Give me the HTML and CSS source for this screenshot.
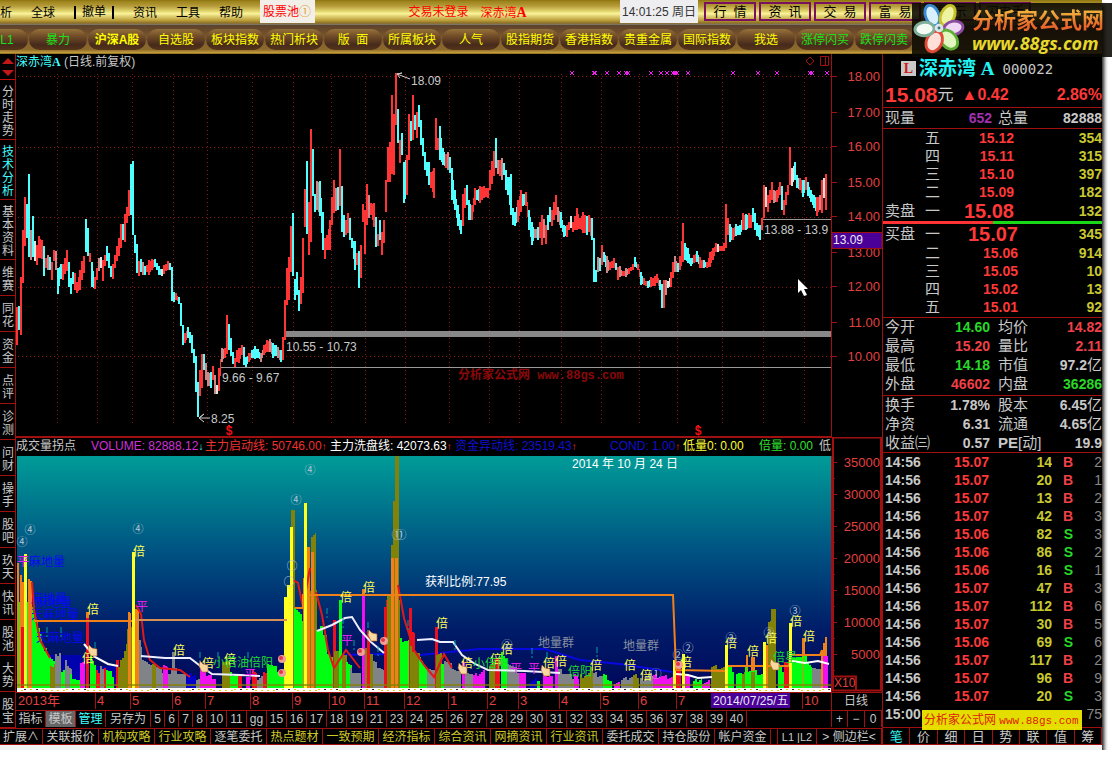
FILE: index.html
```html
<!DOCTYPE html>
<html lang="zh-CN">
<head>
<meta charset="utf-8">
<title>深赤湾A 000022</title>
<link rel="stylesheet" href="styles.css">
</head>
<body>
<div class="window">
  <header class="top">
    <nav class="menubar">
      <div class="menus">
        <button class="menu first">析</button><button class="menu">全球</button><button class="menu barred">撤单</button><button class="menu">资讯</button><button class="menu">工具</button><button class="menu">帮助</button>
      </div>
      <button class="pool">股票池<span class="coin">①</span></button>
      <p class="status"><span>交易未登录</span><span>深赤湾<b>A</b></span></p>
      <time class="clock">14:01:25 周日</time>
      <div class="quick">
        <button>行&nbsp; 情</button><button>资&nbsp; 讯</button><button>交&nbsp; 易</button><button>富&nbsp; 易</button><button>提&nbsp; 示</button><button>闪电手</button>
      </div>
    </nav>
    <nav class="tabs">
      <button class="green cut">L1</button><button class="green">暴力</button><button class="active">沪深A股</button><button>自选股</button><button>板块指数</button><button>热门析块</button><button>版&nbsp; 面</button><button>所属板块</button><button>人气</button><button>股指期货</button><button>香港指数</button><button>贵重金属</button><button>国际指数</button><button>我选</button><button class="green">涨停闪买</button><button class="green">跌停闪卖</button>
    </nav>
    <a class="brand" href="#">
      <svg viewBox="0 0 54 54" class="flower" aria-hidden="true">
        <g stroke-width="3">
          <ellipse cx="20" cy="13" rx="7" ry="11" transform="rotate(-22 20 13)" fill="#d8f0ff" stroke="#3a8bd0"/>
          <ellipse cx="36" cy="13" rx="7" ry="11" transform="rotate(25 36 13)" fill="#eef3a0" stroke="#c5c028"/>
          <ellipse cx="42" cy="26" rx="7" ry="10" transform="rotate(78 42 26)" fill="#f0d8f4" stroke="#8a4ba0"/>
          <ellipse cx="37" cy="38" rx="8" ry="11" transform="rotate(140 37 38)" fill="#e2f7c0" stroke="#5fae38"/>
          <ellipse cx="22" cy="40" rx="8" ry="11" transform="rotate(25 22 40)" fill="#ffe0d8" stroke="#df4a38"/>
          <ellipse cx="12" cy="27" rx="7" ry="10" transform="rotate(85 12 27)" fill="#f4fbf4" stroke="#7fae9a"/>
          <circle cx="27" cy="26" r="3" fill="#3f6f78" stroke="#d8e8e8"/>
        </g>
      </svg>
      <span class="brand-text"><b class="brand-name">分析家公式网</b><b class="brand-url">www.88gs.com</b></span>
    </a>
  </header>

  <div class="body">
    <div class="left">
      <div class="work">
        <nav class="side">
          <div class="arrows"><button class="up" aria-label="上翻"></button><button class="down" aria-label="下翻"></button></div>
          <button class="tall">分时走势</button><button class="tall on">技术分析</button><button class="tall">基本资料</button><button>维赛</button><button>同花</button><button>资金</button><button>点评</button><button>诊测</button><button>问财</button><button>操手</button><button>股吧</button><button>玖天</button><button>快讯</button><button>股池</button><button>大势</button><button>股宝</button>
        </nav>
        <main class="charts">
          <svg id="price" class="plot" viewBox="16 54 866 383"></svg>
          <div class="volume">
            <div class="volume-main">
              <div class="legend">
                <span class="c-grey">成交量拐点</span><span class="c-mag">VOLUME: 82888.12<i class="c-cyan">↓</i></span><span class="c-red">主力启动线: 50746.00<i>↑</i></span><span class="c-white">主力洗盘线: 42073.63<i class="c-red">↑</i></span><span class="c-blue">资金异动线: 23519.43<i class="c-red">↑</i></span><span class="c-blue">COND: 1.00<i class="c-red">↑</i></span><span class="c-yellow">低量0: 0.00</span><span class="c-green">倍量: 0.00</span><span class="c-grey">低</span>
              </div>
              <svg id="volume" class="plot" viewBox="16 456 816 236"></svg>
            </div>
            <svg id="scale" class="plot" viewBox="832 437 50 255"></svg>
          </div>
          <svg id="dates" class="plot" viewBox="16 692 866 18"></svg>
          <div class="templates" id="templates"></div>
        </main>
      </div>
      <nav class="links">
        <button class="narrow">扩展∧</button><button>关联报价</button><button class="gold">机构攻略</button><button class="gold">行业攻略</button><button>逐笔委托</button><button class="gold">热点题材</button><button class="gold">一致预期</button><button class="gold">经济指标</button><button class="gold">综合资讯</button><button class="gold">网摘资讯</button><button class="gold">行业资讯</button><button>委托成交</button><button>持仓股份</button><button>帐户资金</button><span class="gap"></span><button class="levels">L1 |L2</button><button class="grow">&gt; 侧边栏&lt;</button>
      </nav>
    </div>

    <aside class="quote">
      <h1 class="stock"><span class="badge">L</span><span class="name">深赤湾 A</span><span class="code">000022</span></h1>
      <p class="last"><b class="px">15.08</b><span class="unit">元</span><b class="chg">▲0.42</b><b class="pct">2.86%</b></p>
      <p class="vol"><span>现量</span><b class="purple">652</b><span>总量</span><b>82888</b></p>
      <table class="book" id="asks"></table>
      <div class="ratio"><span></span></div>
      <table class="book" id="bids"></table>
      <table class="stats">
        <tr><th>今开</th><td class="g">14.60</td><th>均价</th><td class="r">14.82</td></tr>
        <tr><th>最高</th><td class="r">15.20</td><th>量比</th><td class="r">2.11</td></tr>
        <tr><th>最低</th><td class="g">14.18</td><th>市值</th><td>97.2<i>亿</i></td></tr>
        <tr><th>外盘</th><td class="r">46602</td><th>内盘</th><td class="g">36286</td></tr>
      </table>
      <table class="stats">
        <tr><th>换手</th><td>1.78%</td><th>股本</th><td>6.45<i>亿</i></td></tr>
        <tr><th>净资</th><td>6.31</td><th>流通</th><td>4.65<i>亿</i></td></tr>
        <tr><th>收益㈢</th><td>0.57</td><th><b>PE</b>[动]</th><td>19.9</td></tr>
      </table>
      <table class="ticks" id="ticks"></table>
      <nav class="modes"><button class="on">笔</button><button>价</button><button>细</button><button>日</button><button>势</button><button>联</button><button>值</button><button>筹</button></nav>
      <p class="stamp">分析家公式网 <span>www.88gs.com</span></p>
    </aside>
  </div>
</div>
<script src="app.js"></script>
</body>
</html>
```

FILE: styles.css
```css
* { box-sizing: border-box; }
body {
  margin: 0;
  background: #fff;
  color: #c8c8c8;
  font: 12px/16px "Liberation Sans", "Noto Sans CJK SC", sans-serif;
}
button {
  margin: 0;
  padding: 0;
  border: 0;
  background: none;
  color: inherit;
  font: inherit;
  white-space: nowrap;
  cursor: pointer;
}
p, h1 { margin: 0; }
i { font-style: normal; }

.window {
  margin-right: 12px;
  padding-bottom: 5px;
  background: #f2f2f2;
  box-shadow: 2px 5px 4px 0 #111;
}
.top { position: relative; }
.menubar {
  display: flex;
  height: 25px;
  overflow: hidden;
  color: #000;
  background: linear-gradient(#8a7010 0, #9a8118 4%, #b79d3c 25%, #e9df78 48%, #fbf39b 54%, #b99c37 82%, #8e6f25 92%, #777 100%);
}
.menus { display: flex; flex: 0 0 260px; align-items: center; gap: 19px; }
.menus .first { flex: 0 0 12px; }
.menus .barred { border: solid #000; border-width: 0 2px; padding: 0 6px; line-height: 13px; }
.pool { display: flex; align-items: center; flex: 0 0 55px; padding-left: 3px; height: 23px; background: #f2efe8; color: #f00; }
.coin { color: #e0a030; font-size: 12px; }
.status { display: flex; gap: 12px; flex: 1 1 auto; justify-content: center; align-items: center; color: #f00; line-height: 23px; }
.status b { font-family: "Liberation Serif", serif; font-size: 14px; }
.clock { flex: 0 0 74px; height: 23px; padding: 0 2px; line-height: 25px; background: #eeeef0; color: #333; white-space: nowrap; }
.quick { display: flex; flex: 0 0 404px; gap: 3px; padding: 2px 0 3px 6px; overflow: hidden; }
.quick button { flex: 0 0 52px; height: 19px; border: 2px solid #7a1060; font-size: 13px; line-height: 15px; }

.tabs {
  display: flex;
  height: 29px;
  padding: 4px 0;
  gap: 1px;
  overflow: hidden;
  color: #ff0;
  background: linear-gradient(#5c422e 0, #6b4b2b 20%, #83612e 60%, #8c6a2c 85%, #c09a38 95%, #8a6420 100%);
}
.tabs button {
  flex: 0 0 58px;
  height: 21px;
  border-radius: 11px;
  background: linear-gradient(#96733a 0, #704b28 35%, #472a1b 75%, #553419 100%);
}
.tabs .cut { flex: 0 0 28px; border-radius: 0 11px 11px 0; padding-right: 14px; }
.tabs .green { color: #1be01b; }
.tabs .active { font-weight: bold; }

.brand {
  position: absolute;
  right: -10px;
  top: 3px;
  display: flex;
  width: 200px;
  height: 54px;
  background: rgba(10, 8, 2, .88);
  text-decoration: none;
  white-space: nowrap;
}
.flower { flex: 0 0 54px; height: 52px; }
.brand-text { display: flex; flex-direction: column; padding-left: 6px; }
.brand-name {
  font: bold 22px/30px "Noto Sans CJK SC", sans-serif;
  color: transparent;
  background: linear-gradient(#f2ae3c 30%, #e8662a 75%);
  background-clip: text;
}
.brand-url { font: italic bold 18px/20px "Open Sans", sans-serif; color: #e6d82c; }

.body { display: flex; background: #000; }
.left { flex: 1 1 0; min-width: 0; }
.work { display: flex; }
.side { flex: 0 0 16px; display: flex; flex-direction: column; border-right: 1px solid #a01010; }
.side button {
  flex: 0 0 36px;
  width: 15px;
  padding: 4px 0 0 1px;
  border-bottom: 1px solid #a01010;
  font-size: 12px;
  line-height: 13px;
  white-space: normal;
  word-break: break-all;
}
.side .tall { flex: 0 0 60px; }
.side .on { color: #40ffff; }
.side .arrows { flex: 0 0 26px; display: flex; flex-direction: column; align-items: center; gap: 6px; padding-top: 4px; border-bottom: 1px solid #c01010; }
.side .arrows button { flex: 0 0 6px; width: 0; padding: 0; border: solid transparent; border-width: 0 6px; }
.side .arrows .up { border-bottom: 6px solid #c01818; }
.side .arrows .down { border-top: 6px solid #c01818; }

.charts { flex: 1 1 0; min-width: 0; }
.plot { display: block; width: 100%; height: auto; overflow: hidden; }
.plot text { font: 12px "Liberation Sans", "Noto Sans CJK SC", sans-serif; white-space: pre; }
.plot .axis { font-size: 13px; fill: #e04040; }
.plot .ring { font: 11px "Noto Sans CJK SC", sans-serif; }
.plot .mark { font: bold 12px "Liberation Mono", "Noto Sans CJK SC", monospace; }
.volume { display: grid; grid-template-columns: 816fr 50fr; }
.volume-main { min-width: 0; }
.legend {
  display: grid;
  grid-template-columns: 75px 114px 125px 125px 155px 73px 76px 60px 1fr;
  height: 19px;
  border-top: 1px solid #a01010;
  overflow: hidden;
  line-height: 16px;
  white-space: nowrap;
}
.legend i { font-size: 10px; }
.c-grey { color: #c8c8c8; }
.c-white { color: #fff; }
.c-mag { color: #d030d8; }
.c-red { color: #f03030; }
.c-cyan { color: #40ffff; }
.c-blue { color: #1010d0; }
.c-yellow { color: #ff3; }
.c-green { color: #30e030; }

.templates { display: flex; height: 17px; border-top: 1px solid #a01010; overflow: hidden; }
.templates button { flex: 0 0 20px; border-right: 1px solid #a01010; font-size: 12px; line-height: 15px; }
.templates .word { flex-basis: 30px; }
.templates .word.long { flex-basis: 45px; }
.templates .sel { background: #666; }
.templates .cy { color: #40ffff; }
.templates .digit { flex-basis: 14px; }
.templates .push { margin-left: auto; border-left: 1px solid #a01010; }
.templates .zoom { flex-basis: 17px; }

.links { display: flex; height: 17px; border: solid #a01010; border-width: 1px 0; overflow: hidden; }
.links button { flex: 0 0 56px; border-right: 1px solid #a01010; line-height: 14px; }
.links .narrow { flex-basis: 43px; }
.links .gold { color: #d0c828; }
.links .gap { flex: 0 0 7px; border-right: 1px solid #a01010; }
.links .levels { flex-basis: 39px; font-size: 11px; }
.links .grow { flex: 1 0 62px; }

.quote { position: relative; flex: 0 0 220px; display: flex; flex-direction: column; border-left: 1px solid #a01010; overflow: hidden; font-size: 14px; }
.stock { display: flex; align-items: center; height: 29px; padding-left: 18px; font-weight: normal; }
.badge { width: 15px; height: 15px; background: #c8c8c8; color: #d01818; font: bold 14px/15px "Liberation Serif", serif; text-align: center; }
.name { padding-left: 3px; color: #20f4f4; font: bold 19px/28px "Liberation Serif", "Noto Sans CJK SC", serif; }
.code { padding-left: 8px; font: 14px/28px "DejaVu Sans Mono", monospace; }
.last { display: flex; height: 24px; line-height: 23px; color: #ff3838; }
.px { padding-left: 2px; font-size: 21px; }
.unit { color: #c8c8c8; font-size: 16px; }
.chg { padding-left: 8px; font-size: 16px; }
.pct { margin-left: auto; font-size: 16px; }
.vol { display: grid; grid-template-columns: 48px 59px 48px 1fr; height: 22px; padding-left: 2px; border: solid #a01010; border-width: 1px 0; line-height: 20px; }
.vol span, .quote th { font-size: 15px; font-weight: normal; text-align: left; }
.vol b { text-align: right; }
.vol b + span { padding-left: 6px; }
.purple { color: #a030b0; }

table { width: 100%; table-layout: fixed; border-collapse: collapse; }
td, th { padding: 0; overflow: hidden; white-space: nowrap; line-height: 18px; }
.book tr, .ticks tr { height: 18px; }
.book th:first-child { width: 42px; padding-left: 2px; }
.book th + th { width: 28px; }
.book .p { width: 62px; padding-right: 1px; color: #ff3838; text-align: right; font-weight: bold; }
.book .q { color: #c8c830; text-align: right; font-weight: bold; }
.book .best { height: 20px; }
.book .best .p { width: 66px; font-size: 20px; }
.ratio { height: 3px; background: #18d818; }
.ratio span { display: block; width: 50%; height: 3px; background: #f33; }
.stats { border-top: 1px solid #a01010; margin-top: 1px; }
.stats tr { height: 19px; }
.stats th { width: 54px; padding-left: 2px; line-height: 18px; }
.stats td { width: 53px; text-align: right; font-weight: bold; }
.stats td + th { padding-left: 8px; }
.stats td + th + td { width: auto; }
.stats i { font-weight: normal; font-size: 15px; }
.r { color: #f04048; }
.g { color: #28d828; }
.ticks { border-top: 1px solid #a01010; font-weight: bold; }
.ticks td { text-align: right; }
.ticks td:first-child { width: 38px; text-align: left; padding-left: 2px; }
.ticks td:nth-child(2) { width: 68px; color: #ff3838; }
.ticks td:nth-child(3) { width: 63px; color: #c8c830; }
.ticks td:nth-child(4) { width: 21px; }
.ticks td:nth-child(5) { color: #888; font-weight: normal; }
.modes { display: flex; height: 18px; margin-top: auto; border: solid #a01010; border-width: 1px 0; }
.modes button { flex: 1 1 0; border-right: 1px solid #a01010; line-height: 15px; font-size: 13px; }
.modes .on { color: #30f0f0; }
.stamp {
  position: absolute;
  right: 20px;
  bottom: 15px;
  width: 160px;
  height: 20px;
  padding-left: 2px;
  background: rgba(242, 236, 0, .94);
  color: #e02000;
  font-size: 12px;
  line-height: 20px;
  white-space: nowrap;
}
.stamp span { font: 11px "Liberation Mono", monospace; }
```

FILE: app.js
```js
const el = (id) => document.getElementById(id);
const line = (x1, y1, x2, y2, c, w = 1, extra = "") =>
  `<line x1="${x1}" y1="${y1}" x2="${x2}" y2="${y2}" stroke="${c}" stroke-width="${w}" ${extra}/>`;
const rect = (x, y, w, h, c, extra = "") =>
  `<rect x="${x}" y="${y}" width="${w}" height="${h}" fill="${c}" ${extra}/>`;
const text = (x, y, s, c, cls = "", anchor = "start") =>
  `<text x="${x}" y="${y}" fill="${c}" class="${cls}" text-anchor="${anchor}">${s}</text>`;
const curve = (pts, c, w = 2) => `<polyline points="${pts}" fill="none" stroke="${c}" stroke-width="${w}"/>`;
const DARK = "#a01010";

/* Price chart: x, high, low, colour */
const BARS = `17 307 345 r,19 306 330 c,21 277 335 r,23 230 283 r,25 197 246 r,27 204 238 c,29 174 257 c,31 230 260 g,33 216 257 c,35 241 261 w,37 245 265 r,39 236 258 r,42 240 259 r,44 246 276 c,46 258 268 r,48 255 270 g,50 257 270 c,52 262 280 r,54 250 261 r,56 251 270 g,58 268 294 c,61 264 279 c,63 264 280 r,65 258 274 r,67 250 271 r,69 262 287 c,71 278 294 c,73 272 284 c,75 273 290 r,77 282 293 r,80 270 290 r,82 261 280 r,84 256 273 r,86 219 252 c,88 228 256 c,90 253 262 r,92 262 287 c,95 277 289 r,97 268 280 r,99 258 271 g,101 257 268 w,103 260 281 r,105 255 266 r,107 246 261 c,109 253 268 c,111 266 277 c,113 264 279 r,115 255 268 r,117 246 261 r,119 238 256 r,121 224 248 r,123 224 240 c,125 214 242 r,127 207 223 r,129 190 216 r,131 164 215 c,133 161 235 c,135 235 253 c,137 244 273 c,139 261 276 r,141 259 272 c,143 262 275 g,145 266 275 c,147 265 272 r,149 260 275 r,152 259 270 r,155 259 267 c,157 263 270 c,159 266 275 c,162 269 276 w,164 265 274 r,168 261 270 r,170 263 270 c,172 267 301 c,174 292 302 c,176 293 300 r,179 297 304 c,181 303 326 c,183 325 345 c,185 333 343 r,188 327 338 c,190 332 343 c,192 335 353 c,194 349 363 c,196 356 392 c,198 382 417 c,200 370 396 r,202 354 388 r,204 354 370 c,206 363 380 g,208 372 386 g,211 372 388 c,213 366 380 r,215 375 394 g,217 385 394 w,219 368 391 r,222 348 362 g,225 348 358 r,227 315 354 r,229 324 350 c,231 338 356 c,233 352 364 c,235 358 367 r,237 350 362 r,239 348 363 r,242 345 355 r,244 347 365 c,246 357 367 c,249 353 362 r,252 350 358 c,255 346 359 c,258 349 358 c,261 353 362 g,264 345 355 r,267 340 352 r,270 339 352 g,273 343 358 c,276 345 356 c,278 347 358 g,281 350 362 c,283 337 360 r,285 300 340 r,287 268 305 r,289 257 300 r,291 226 272 r,293 213 276 c,295 279 300 c,297 272 295 c,299 290 311 c,301 277 304 r,303 238 293 r,305 189 227 r,307 161 234 c,309 202 255 r,311 129 242 r,313 149 196 c,315 194 212 c,317 181 210 g,320 181 216 c,323 212 250 c,325 238 259 r,327 235 250 r,330 220 250 r,332 197 225 r,334 180 213 r,336 188 211 g,338 187 210 c,340 149 206 r,342 186 232 c,344 215 237 c,346 220 235 r,348 213 233 r,350 218 240 c,352 238 248 c,355 241 270 c,357 253 265 r,359 251 288 c,361 245 278 r,363 204 222 r,365 210 254 r,367 184 225 r,369 195 218 g,371 203 215 r,374 203 227 r,376 217 247 c,378 234 246 r,380 220 240 c,382 232 255 r,384 220 243 r,386 180 212 r,388 147 182 r,390 142 182 r,392 95 174 r,394 114 175 r,396 73 125 r,398 109 143 c,400 140 163 r,402 133 155 c,404 162 203 c,407 155 195 r,409 114 160 r,411 121 141 c,413 95 140 r,415 115 130 c,417 112 138 r,419 105 127 c,421 120 145 c,423 138 156 c,425 152 170 c,427 162 176 c,429 162 185 c,431 172 188 r,434 168 198 r,436 118 150 r,438 138 150 r,440 126 160 c,443 148 165 c,446 154 168 r,448 152 170 g,450 157 173 c,452 168 200 c,455 190 210 c,458 205 226 c,461 220 234 c,463 194 226 r,465 188 208 r,467 185 205 c,469 200 220 c,472 205 220 r,475 188 205 r,477 190 200 c,480 186 203 r,484 186 198 r,488 188 198 r,490 170 190 r,492 161 184 r,496 138 168 c,498 160 174 g,500 160 176 r,502 158 180 g,504 163 175 c,506 170 190 c,508 177 195 c,511 174 215 c,513 208 225 c,515 212 226 c,518 200 222 r,521 190 212 r,523 194 206 c,526 192 206 r,529 210 230 c,532 222 245 c,535 229 238 g,538 227 240 c,540 222 238 r,542 215 245 r,544 219 238 g,546 225 244 r,548 215 230 c,550 207 222 c,552 210 226 r,554 202 220 r,556 195 215 r,558 207 222 g,561 212 228 c,564 225 237 c,567 225 237 r,569 222 230 r,571 216 228 w,573 222 232 r,577 208 230 r,580 218 229 r,583 212 233 r,587 216 235 c,589 215 232 r,592 218 240 c,594 238 282 c,596 270 282 c,598 257 272 g,600 258 271 c,602 245 265 r,604 252 262 c,607 256 273 g,610 262 270 r,614 258 268 r,616 263 270 c,618 267 280 r,620 266 277 g,623 271 276 r,626 268 277 g,629 268 274 r,633 264 270 r,635 257 267 c,638 264 270 r,641 272 285 c,644 278 285 r,648 281 288 c,651 277 287 r,655 276 286 r,657 274 283 r,660 280 290 c,662 284 308 c,664 280 308 r,666 280 295 g,668 281 288 w,671 272 287 r,673 262 278 r,675 256 272 g,678 263 272 c,680 256 270 r,683 223 262 r,685 243 260 c,688 248 263 c,691 258 266 c,694 255 263 r,697 251 262 c,700 257 268 r,704 260 268 c,707 262 268 r,710 252 267 r,713 248 260 r,716 243 252 r,718 244 252 w,720 246 251 r,724 243 251 r,726 204 248 r,728 218 235 r,730 224 242 c,733 228 240 r,736 224 236 c,740 225 235 c,743 213 230 r,746 214 230 c,749 213 228 r,751 215 228 r,753 208 222 c,755 213 230 c,757 223 236 c,760 225 240 c,762 218 230 r,764 185 218 r,766 187 207 w,768 195 212 r,770 190 203 r,772 182 200 r,774 190 203 g,777 190 202 r,780 182 195 r,782 186 210 c,784 200 215 r,786 192 205 r,788 185 195 r,790 147 185 r,792 168 186 w,795 162 180 c,797 175 188 c,800 178 190 r,803 180 197 c,806 177 190 r,808 182 196 c,811 190 202 c,814 195 208 c,817 197 216 r,820 195 210 g,822 180 213 r,824 178 198 w,826 174 210 r`
  .split(",").map((s) => s.split(" ")).map(([x, t, b, c]) => [+x, +t, +b, c]);
const HUE = { r: "#ff3434", c: "#50ffff", g: "#c88", w: "#d8e8e0" };

function drawPrice() {
  let s = rect(16, 54, 866, 383, "#000");
  for (const x of [57, 97, 132, 173, 207, 252, 293, 331, 365, 405, 449, 489, 519, 561, 601, 639, 677, 722, 763, 804])
    s += line(x + .5, 74, x + .5, 423, "#8c1414", 1, 'stroke-dasharray="1 3"');
  for (const y of [76, 147, 217, 287, 356])
    s += line(18, y + .5, 831, y + .5, "#8c1414", 1, 'stroke-dasharray="1 3"');
  s += rect(285, 331, 546, 6, "#888");
  s += line(220, 367.5, 831, 367.5, "#999") + line(762, 219.5, 831, 219.5, "#999");
  BARS.forEach(([x, t, b, c], i) => {
    s += rect(x - 1, t, 2, b - t, HUE[c]);
    const n = BARS[i + 1];
    if (n && n[0] - x > 2) {
      const wide = n[0] - x - 2;
      s += rect(x + 1, Math.round((t + n[1]) / 2) + 1, wide, Math.max(3, Math.round((b + n[2] - t - n[1]) / 2) - 2), HUE[c]);
    }
  });
  s += text(16, 66, '<tspan fill="#40ffff">深赤湾</tspan><tspan fill="#40ffff" font-weight="bold" font-family="Liberation Serif">A</tspan> (日线.前复权)', "#c8c8c8");
  s += text(411, 85, "18.09", "#c8c8c8") + curve("410,79 397,74 402,73 397,74 400,78", "#ccc", 1);
  s += text(211, 423, "8.25", "#c8c8c8") + curve("210,418 199,418 204,414 199,418 204,422", "#ccc", 1);
  s += text(222, 382, "9.66 - 9.67", "#c8c8c8") + text(286, 351, "10.55 - 10.73", "#c8c8c8");
  s += text(764, 234, "13.88 - 13.9", "#c8c8c8");
  s += text(458, 379, "分析家公式网 www.88gs.com", "#8c0808", "mark");
  for (const x of [572, 594, 595, 607, 619, 626, 628, 651, 661, 667, 673, 675, 677, 688, 733, 758, 777, 810, 812, 827])
    s += curve(`${x - 2},71 ${x + 2},75 ${x},73 ${x + 2},71 ${x - 2},75`, "#f020f0", 1);
  for (const x of [229, 698]) s += text(x, 435, "$", "#f01010", "mark", "middle") + curve(`${x - 2},427 ${x},425 ${x + 2},427`, "#f01010", 1);
  s += `<path d="M810 57l4 4-4 4-4-4z M820.5 56.5h8v9h-8z M825.5 56v10" fill="none" stroke="${DARK}"/>`;
  s += line(831.5, 54, 831.5, 437, DARK) + line(16, 436.5, 831, 436.5, DARK);
  [[18, 81], [17, 117], [16, 151], [15, 187], [14, 221], [13, 257], [12, 291], [11, 327], [10, 361]]
    .forEach(([v, y]) => { s += line(832, y - 4.5, 837, y - 4.5, DARK) + text(880, y, v + ".00", "#e04040", "axis", "end"); });
  s += rect(832, 232.5, 50, 16, "#4a0098", `stroke="${DARK}"`) + text(833, 244, "13.09", "#e8e8f0");
  s += '<path d="M798 279v14l3-3 3 6 3-1-3-6h4z" fill="#fff"/>';
  el("price").innerHTML = s;
}

/* Volume areas: colour, x from, x to, top at start, top at end */
const FILLS = `G 17 24 600 602,O 17 19 563 563,O 20 24 575 588,R 21 24 627 627,G 27 34 600 612,O 28 32 579 582,G 34 45 615 654,G 45 55 650 665,L 50 56 668 660,D 55 61 656 650,G 61 66 672 668,D 65 72 662 670,G 70 80 676 682,M 80 85 663 661,O 86 89 612 612,R 86 89 618 618,G 90 96 655 668,R 96 100 670 676,D 100 104 666 672,R 104 106 668 668,G 106 114 670 676,R 116 119 660 660,L 118 129 668 635,L 127 133 627 627,O 128 131 612 614,G 134 139 620 620,O 135 139 609 611,D 139 142 640 650,D 142 153 658 670,L 152 156 664 664,D 156 171 667 677,M 163 168 665 668,D 171 186 668 677,D 172 175 652 652,B 186 196 675 674,D 196 202 680 680,M 200 206 664 668,M 206 216 676 678,L 222 230 660 662,G 230 240 674 675,R 238 242 676 676,M 246 250 677 677,R 252 257 670 674,D 257 263 678 675,R 263 268 672 675,G 267 284 662 675,Y 284 287 597 597,L 291 295 510 510,G 294 303 607 620,O 303 305 578 578,L 307 317 590 592,L 311 316 537 532,O 307 310 547 547,O 311 314 552 552,G 316 327 630 636,G 320 323 626 626,G 327 333 652 660,R 333 336 620 620,L 334 347 650 655,L 339 342 613 613,G 339 342 600 600,G 346 352 662 670,D 350 361 670 675,O 362 365 589 589,M 362 365 595 595,L 365 373 650 655,R 367 370 630 630,D 373 384 662 672,R 384 388 607 592,L 387 400 592 600,L 391 394 545 545,L 393 396 501 501,L 395 399 456 456,O 391 394 558 558,O 395 398 558 558,G 400 409 640 641,R 409 412 608 608,R 412 415 632 634,L 410 420 648 656,G 419 427 656 675,D 427 435 667 672,R 435 438 627 627,L 436 442 655 655,G 441 444 664 664,D 444 461 660 675,M 462 465 662 662,D 465 473 670 675,M 473 485 676 670,L 489 496 665 662,R 495 500 658 658,G 501 507 652 666,D 507 519 662 673,M 519 526 672 676,B 529 537 682 679,G 537 540 681 681,M 543 553 674 676,M 555 558 656 656,D 558 574 670 678,M 574 579 674 680,L 580 590 676 674,L 590 593 667 670,D 593 603 674 676,G 603 612 675 682,M 614 620 683 683,D 621 633 680 676,L 633 639 676 676,D 640 653 680 674,M 653 673 676 677,Y 673 676 660 660,R 676 681 666 664,M 685 690 675 675,G 693 702 682 677,M 702 710 682 681,L 711 727 667 668,G 728 734 667 672,G 736 742 674 675,L 742 748 672 670,O 746 748 655 655,O 751 755 657 656,G 745 763 669 675,L 751 755 672 672,O 766 772 645 652,L 768 773 622 620,L 771 776 609 609,G 778 786 665 674,R 784 789 662 665,G 792 803 656 660,O 802 805 638 638,G 803 812 655 668,D 812 821 666 672,O 821 827 650 633,M 823 828 656 656`
  .split(",").map((r) => r.split(" ")).map(([c, a, b, t, u]) => [c, +a, +b, +t, +u]);
const SPIKES = [[24, 554], [132, 552], [287, 585], [290, 527], [304, 503], [682, 654], [725, 645], [763, 642], [789, 623]];
const PAINT = { G: "#0f1", O: "#f08018", R: "#ee1020", L: "#828208", D: "#808488", M: "#f010f0", B: "#0000c8", Y: "#ff2" };

function drawVolume() {
  let s = '<defs><linearGradient id="sea" x2="0" y2="1"><stop offset="0" stop-color="#009c98"/><stop offset=".45" stop-color="#004c80"/><stop offset=".75" stop-color="#001c68"/><stop offset="1" stop-color="#00085c"/></linearGradient></defs>';
  s += rect(16, 456, 816, 236, "#000") + rect(17, 456, 814, 232, "url(#sea)");
  s += rect(48, 655, 35, 32, "#0000c0", 'opacity=".8"') + rect(92, 666, 26, 20, "#0000c0", 'opacity=".7"');
  s += curve("345,655 380,654 420,655 480,649 545,649 580,660 620,664 673,672 673,686", "#0808e0", 2);
  for (const [c, a, b, t, u] of FILLS)
    for (let x = a; x < b; x += 2) {
      const flat = b - a < 6;
      const y = Math.round(t + (u - t) * (x - a) / (b - a) + (flat ? 0 : (x * 7) % 5 - 2));
      s += rect(x, y, Math.min(2, b - x), 688 - y, PAINT[c]);
    }
  [[29, 566, "麻地量"], [31, 603, "麻地量"], [36, 607, "麻地量"], [31, 619, "天麻地量"], [36, 642, "天麻地量"]]
    .forEach(([x, y, t]) => { s += text(x, y, t, "#0808f0"); });
  s += curve("32,582 34,610 40,640 50,658", "#e01818") + curve("136,605 141,614 144,640 150,660 160,668 180,670 190,677", "#e01818", 2);
  s += curve("316,592 322,615 328,650 334,668 346,650 360,668", "#e01818") + curve("398,585 404,618 414,650 424,665 434,677 444,654 452,668", "#e01818") + curve("293,580 298,583 303,607 310,568", "#e01818", 2);
  s += curve("141,656 165,658 190,658 199,665 212,674 240,675 260,676", "#eef", 2);
  s += curve("317,631 332,625 345,618 352,617 360,630 371,642 384,653", "#eef", 2) + curve("417,640 432,639 440,642 453,642 462,655 475,664 488,670 525,671 560,673", "#eef", 2);
  s += curve("84,644 95,657 108,664 118,666", "#fff", 2) + curve("676,674 688,675 698,678 712,677", "#fff", 2) + curve("792,661 805,663 818,661 829,664", "#fff", 2);
  s += curve("34,621 133,621", "#f08018") + curve("135,620 287,620", "#d89058") + curve("295,608 303,608 303,595 673,595 676,670 726,671 727,666 789,666 790,655 820,655 822,650", "#f08018");
  for (const [x, y] of SPIKES) s += rect(x, y, 3, 688 - y, PAINT.Y);
  s += rect(17, 684, 814, 2, "#888000", 'opacity=".7"') + rect(17, 688, 814, 4, "#fff");
  for (let x = 18; x < 830; x += 3) if (x % 7 < 4) s += rect(x, 689 + x % 2, 2, 1, x % 4 ? "#e8c800" : "#222");
  for (const [x, y] of [[47, 627], [61, 627], [95, 642], [200, 652], [218, 652], [248, 652], [327, 608], [343, 618], [354, 640], [368, 622], [378, 646], [408, 620], [455, 640], [532, 648], [547, 652], [597, 647]])
    s += line(x, y, x, y + 6, "#00a0a0", 1) + line(x, y + 8, x, y + 10, "#00a0a0", 1);
  for (const [x, y] of [[133, 556], [87, 614], [173, 655], [82, 663], [202, 668], [224, 664], [340, 602], [363, 592], [436, 628], [461, 668], [490, 664], [501, 654], [543, 668], [555, 666], [590, 670], [624, 670], [640, 680], [680, 667], [725, 648], [747, 656], [765, 643], [790, 626], [803, 641]])
    s += text(x, y, "倍", "#ff5");
  for (const [x, y] of [[136, 611], [17, 566], [341, 645], [510, 673], [528, 673], [244, 679]]) s += text(x, y, "平", "#e020e8");
  s += text(213, 667, "小倍油倍阳", "#20d830") + text(473, 668, "小倍阳", "#20d830") + text(568, 676, "倍阳", "#20d830") + text(773, 662, "倍星", "#20d830");
  for (const [x, y, n] of [[22, 542, "④"], [30, 530, "④"], [138, 529, "④"], [310, 470, "④"], [296, 500, "④"], [292, 566, "○"], [289, 582, "○"], [397, 535, "①"], [401, 535, "①"], [507, 645, "②"], [656, 674, "①"], [678, 655, "②"], [688, 648, "②"], [731, 638, "③"], [769, 633, "③"], [795, 611, "③"]])
    s += text(x, y + 4, n, "#b8c4d4", "ring", "middle");
  for (const [x, y] of [[92, 650], [372, 635], [203, 666], [462, 668], [545, 670], [774, 664]])
    s += `<path d="M${x - 3} ${y - 5}l3 3 5 1v7h-6l-3-6z" fill="#f8d8a0" stroke="#a86020" stroke-width=".6"/>`;
  for (const [x, y] of [[282, 659], [282, 673], [384, 641], [361, 652], [679, 665]])
    s += `<circle cx="${x}" cy="${y}" r="4" fill="#f0a098"/><circle cx="${x - 1}" cy="${y - 1}" r="2" fill="#e03848"/>`;
  s += text(572, 468, "2014 年 10 月 24 日", "#fff") + text(425, 586, "获利比例:77.95", "#fff");
  s += text(538, 647, "地量群", "#8890a0") + text(623, 650, "地量群", "#8890a0") + line(831.5, 456, 831.5, 692, DARK);
  el("volume").innerHTML = s;
}

function drawScale() {
  let s = rect(832, 437, 50, 255, "#000") + `<path d="M833 437.5h48v253h-48z M833 676.5h23v14" fill="none" stroke="${DARK}" stroke-width="2"/>`;
  [35, 30, 25, 20, 15, 10, 5].forEach((v, i) => {
    const y = 467 + i * 32;
    s += line(833, y - 4.5, 837, y - 4.5, DARK) + line(833, y + 11.5, 835, y + 11.5, DARK) + text(880, y, v + "000", "#e04040", "axis", "end");
  });
  el("scale").innerHTML = s + text(834, 687, "X10", "#e04040");
}

function drawDates() {
  let s = line(16, 692.5, 882, 692.5, DARK) + text(18, 705, "2013年", "#e04040", "axis");
  [[95, 4], [130, 5], [172, 6], [205, 7], [250, 8], [292, 9], [329, 10], [364, 11], [404, 12], [448, 1], [487, 2], [518, 3], [559, 4], [600, 5], [638, 6], [676, 7], [802, 10]]
    .forEach(([x, t]) => { s += line(x + .5, 693, x + .5, 709, DARK) + text(x + 2, 705, t, "#e04040", "axis"); });
  s += rect(711, 693, 79, 15, "#4a0098") + text(713, 705, "2014/07/25/五", "#e8e8f0") + line(831.5, 692, 831.5, 710, DARK) + text(844, 705, "日线", "#c8c8c8");
  el("dates").innerHTML = s;
}

drawPrice(); drawVolume(); drawScale(); drawDates();

const cell = (t, cls = "") => `<button class="${cls}">${t}</button>`;
const pages = ["gg", 15, 16, 17, 18, 19, 21, 23];
for (let n = 24; n <= 40; n++) pages.push(n);
el("templates").innerHTML = cell("指标", "word") + cell("模板", "word sel") + cell("管理", "word cy") + cell("另存为", "word long") +
  [5, 6, 7, 8].map((n) => cell(n, "digit")).join("") + [10, 11].concat(pages).map((n) => cell(n)).join("") +
  cell("+", "zoom push") + cell("−", "zoom") + cell("0", "zoom");

const book = (rows) => rows.map(([side, n, p, q]) =>
  `<tr class="${side ? "best" : ""}"><th>${side}</th><th>${n}</th><td class="p">${p}</td><td class="q">${q}</td></tr>`).join("");
el("asks").innerHTML = book([["", "五", "15.12", 354], ["", "四", "15.11", 315], ["", "三", "15.10", 397], ["", "二", "15.09", 182], ["卖盘", "一", "15.08", 132]]);
el("bids").innerHTML = book([["买盘", "一", "15.07", 345], ["", "二", "15.06", 914], ["", "三", "15.05", 10], ["", "四", "15.02", 13], ["", "五", "15.01", 92]]);

el("ticks").innerHTML = [[7, 14, "B", 2], [7, 20, "B", 1], [7, 13, "B", 2], [7, 42, "B", 3], [6, 82, "S", 3], [6, 86, "S", 2], [6, 16, "S", 1], [7, 47, "B", 3], [7, 112, "B", 6], [7, 30, "B", 5], [6, 69, "S", 6], [7, 117, "B", 2], [7, 96, "B", 9], [7, 20, "S", 3], [0, "", "", 75]]
  .map(([p, v, d, n]) => `<tr><td>${d ? "14:56" : "15:00"}</td><td>${p ? "15.0" + p : ""}</td><td>${v}</td><td class="${d === "B" ? "r" : "g"}">${d}</td><td>${n}</td></tr>`).join("");
```
